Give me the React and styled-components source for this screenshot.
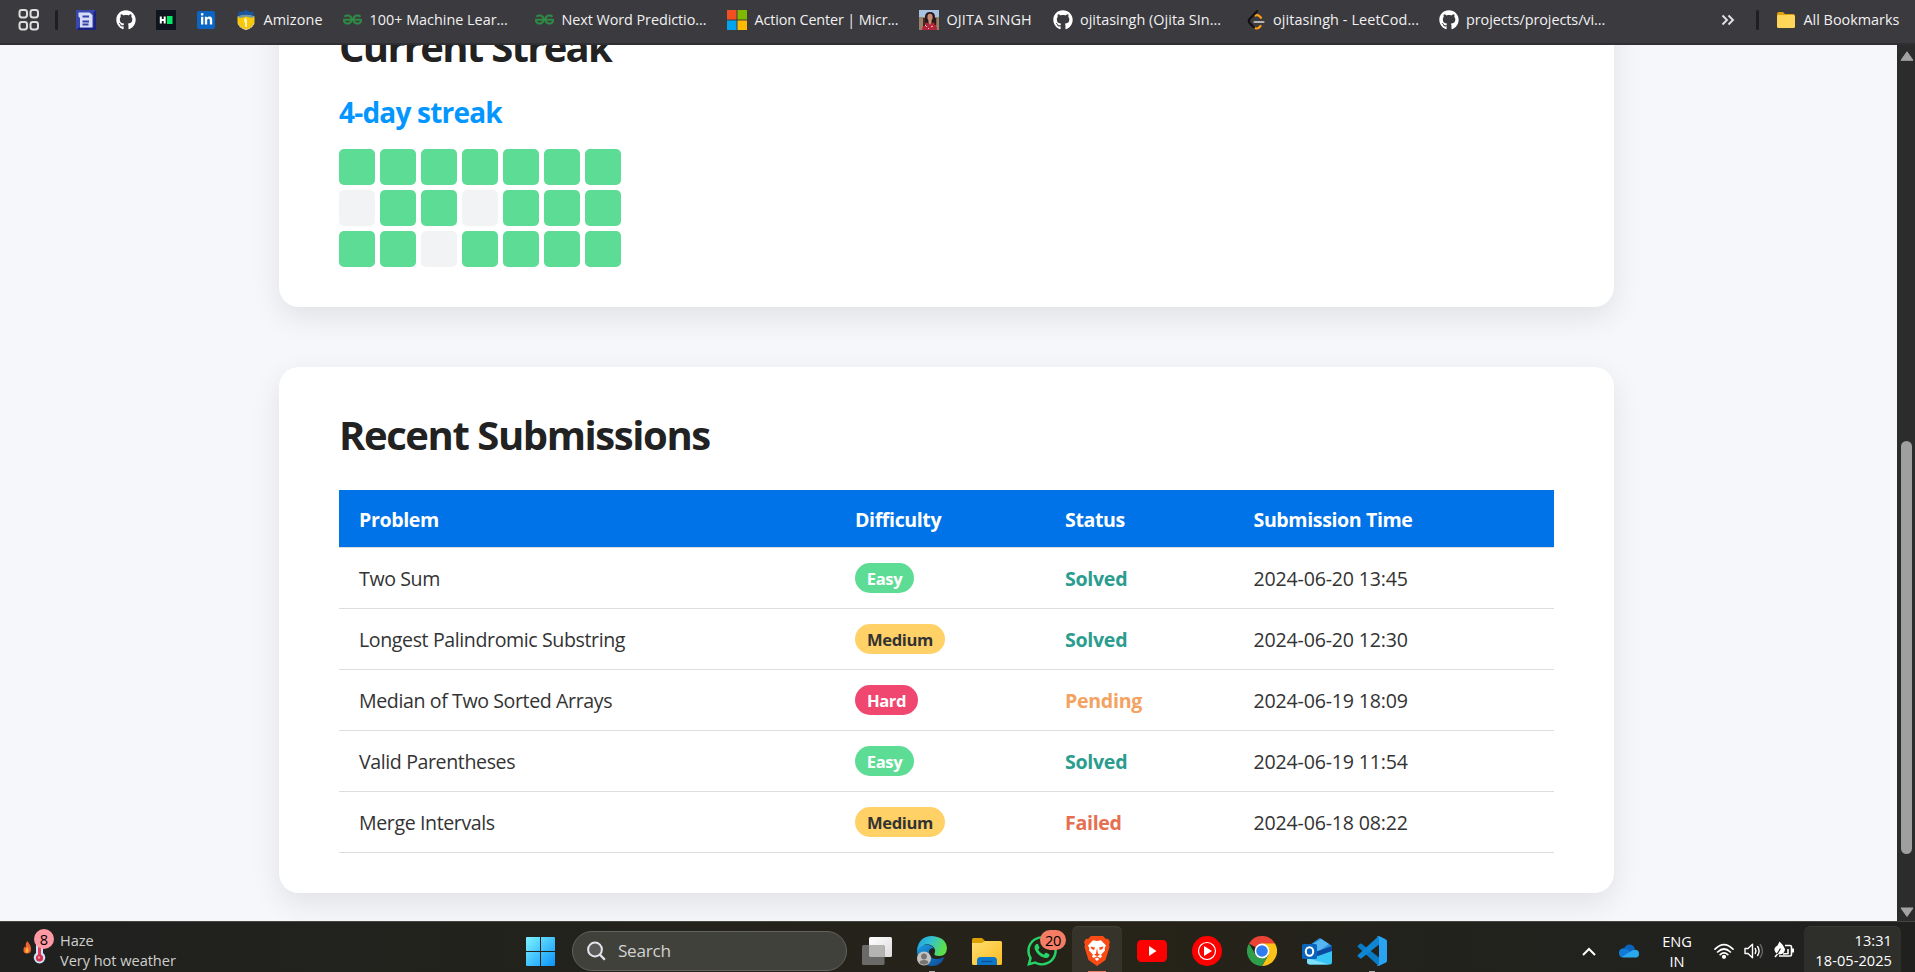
import React from "react";
import styled, { createGlobalStyle } from "styled-components";
import { FaGithub, FaWhatsapp, FaLinkedinIn } from "react-icons/fa6";
import { SiGeeksforgeeks } from "react-icons/si";

const GlobalStyle = createGlobalStyle`
  * { box-sizing: border-box; }
  html, body { margin: 0; padding: 0; }
  body {
    font-family: "Open Sans", "Noto Sans", sans-serif;
    overflow: hidden;
    background: #f5f7fb;
  }
  svg { display: block; flex: none; }
`;

const Screen = styled.div`
  display: flex;
  flex-direction: column;
  width: 1915px;
  height: 972px;
  overflow: hidden;
`;

/* ---------- bookmarks bar ---------- */

const BookmarksBar = styled.header`
  display: flex;
  align-items: center;
  height: 45px;
  flex: none;
  padding: 0 17px 4px 16px;
  background: #3b3a3e;
  border-bottom: 2px solid #302f33;
  color: #f1f1f3;
  font-size: 14.4px;
`;

const BarDivider = styled.span`
  width: 3px;
  height: 20px;
  border-radius: 2px;
  background: #1f1f22;
  margin: 0 ${(p) => p.$after}px 0 ${(p) => p.$before}px;
`;

const IconBookmark = styled.span`
  display: flex;
  justify-content: center;
  width: 20px;
  margin-right: 20px;
`;

const Bookmark = styled.span`
  display: flex;
  align-items: center;
  gap: 7.5px;
  width: ${(p) => p.$width}px;
  flex: none;
  white-space: nowrap;
  letter-spacing: ${(p) => p.$track}px;
`;

const IconSlot = styled.span`
  display: flex;
  justify-content: center;
  width: 20px;
  flex: none;
`;

const BarSpacer = styled.span`
  flex: 1;
`;

/* ---------- page ---------- */

const Browser = styled.div`
  display: flex;
  flex: 1;
  min-height: 0;
  background: #f5f7fb;
`;

const Viewport = styled.main`
  flex: 1;
  overflow: hidden;
  padding-left: 279px;
`;

const Page = styled.div`
  display: flex;
  flex-direction: column;
  gap: 60px;
  width: 1335px;
  margin-top: -66px;
`;

const Card = styled.section`
  padding: 40px 60px;
  border-radius: 20px;
  background: #fff;
  box-shadow: 0 10px 30px rgba(0, 0, 0, 0.09);
`;

const CardTitle = styled.h2`
  margin: 0 0 ${(p) => p.$gap}px;
  font-size: 40px;
  line-height: 55px;
  font-weight: 700;
  color: #222;
  letter-spacing: ${(p) => p.$track}px;
  white-space: nowrap;
`;

const StreakCount = styled.p`
  margin: 0 0 18px;
  font-size: 28px;
  line-height: 38px;
  font-weight: 700;
  color: #0496ff;
  letter-spacing: -0.8px;
`;

const StreakGrid = styled.div`
  display: grid;
  grid-template-columns: repeat(7, 36px);
  grid-auto-rows: 36px;
  gap: 5px;
`;

const Day = styled.span`
  border-radius: 5px;
  background: ${(p) => (p.$active ? "#5ddc96" : "#f1f3f5")};
`;

const Table = styled.div`
  display: flex;
  flex-direction: column;
  color: #333;
  font-size: 19.6px;
`;

const Row = styled.div`
  display: grid;
  grid-template-columns: 496px 210px 188.5px 1fr;
  align-items: center;
  height: 61px;
  padding-left: 20px;
  border-bottom: 1px solid #ddd;
  white-space: nowrap;
`;

const HeadRow = styled(Row)`
  height: 58px;
  padding-top: 1px;
  background: #0073e8;
  background-clip: padding-box;
  color: #fff;
  font-weight: 700;
`;

const HeadCell = styled.span`
  letter-spacing: -0.4px;
`;

const Problem = styled.span`
  letter-spacing: -0.4px;
`;

const Time = styled.span`
  letter-spacing: -0.19px;
`;

const statusColors = { Solved: "#2a9d8f", Pending: "#f4a261", Failed: "#e76f51" };

const Status = styled.span`
  font-weight: 700;
  letter-spacing: -0.3px;
  color: ${(p) => statusColors[p.$kind]};
`;

const levels = {
  Easy: { bg: "#5ddc96", fg: "#fff", width: 59 },
  Medium: { bg: "#ffd166", fg: "#333", width: 90 },
  Hard: { bg: "#ef476f", fg: "#fff", width: 63 },
};

const Badge = styled.span`
  display: flex;
  align-items: center;
  justify-content: center;
  width: ${(p) => levels[p.$level].width}px;
  height: 30px;
  padding-top: 1px;
  border-radius: 15px;
  background: ${(p) => levels[p.$level].bg};
  color: ${(p) => levels[p.$level].fg};
  font-size: 16.6px;
  font-weight: 700;
  letter-spacing: -0.4px;
`;

/* ---------- scrollbar ---------- */

const Scrollbar = styled.aside`
  display: flex;
  flex-direction: column;
  align-items: center;
  width: 18px;
  padding: 6px 0 4px 1px;
  background: #2c2c2c;
`;

const Thumb = styled.span`
  width: 11px;
  height: 413px;
  margin-top: 380px;
  margin-bottom: auto;
  border-radius: 6px;
  background: #9f9f9f;
`;

/* ---------- taskbar ---------- */

const Taskbar = styled.footer`
  display: flex;
  align-items: flex-start;
  height: 51px;
  flex: none;
  border-top: 1px solid #464641;
  background: linear-gradient(90deg, #20201f 0%, #22221d 25%, #262318 60%, #22221d 75%, #20201f 100%);
  color: #fff;
  font-size: 14.6px;
  line-height: 20px;
`;

const Weather = styled.div`
  display: flex;
  width: 526px;
  padding: 7px 0 0 22px;
`;

const WeatherIcon = styled.span`
  position: relative;
  width: 38px;
  height: 40px;
`;

const WeatherBadge = styled.span`
  position: absolute;
  left: 12px;
  top: 0;
  width: 20px;
  height: 20px;
  border-radius: 50%;
  background: #ff99a4;
  color: #000;
  text-align: center;
  font-size: 14.6px;
  line-height: 20px;
`;

const WeatherText = styled.div`
  padding-top: 1px;
  color: #cfcfcd;
  white-space: nowrap;
  letter-spacing: ${(p) => p.$track}px;
`;

const StartButton = styled.span`
  padding-top: 15px;
  width: 46px;
`;

const SearchBox = styled.div`
  display: flex;
  align-items: center;
  gap: 12px;
  width: 275px;
  height: 40px;
  margin: 9px 2.5px 0 0;
  padding-left: 14px;
  border: 1px solid #62625d;
  border-radius: 20px;
  background: #41413c;
  color: #d2d2d0;
  font-size: 17.2px;
  letter-spacing: -0.3px;
`;

const AppTile = styled.span`
  position: relative;
  display: flex;
  justify-content: center;
  align-items: center;
  width: 50px;
  height: 50px;
  margin: 4px 2.5px 0;
  border-radius: 6px 6px 0 0;
  ${(p) => p.$active && "background: #35332a; box-shadow: inset 0 1px 0 #403e36;"}
`;

const RunningMark = styled.span`
  position: absolute;
  bottom: 4px;
  left: ${(p) => (50 - p.$width) / 2}px;
  width: ${(p) => p.$width}px;
  height: 1px;
  background: ${(p) => p.$color};
`;

const CountBadge = styled.span`
  position: absolute;
  left: 23px;
  top: 4px;
  width: 26px;
  height: 20px;
  border-radius: 10px;
  background: #f57d65;
  color: #000;
  text-align: center;
  font-size: 14.6px;
  letter-spacing: -0.4px;
`;

const Tray = styled.div`
  display: flex;
  margin-left: auto;
  padding-right: 14px;
`;

const TrayItem = styled.span`
  display: flex;
  justify-content: center;
  width: ${(p) => p.$width}px;
  padding-top: ${(p) => p.$top}px;
`;

const Language = styled.div`
  width: 42px;
  padding-top: 9px;
  text-align: center;
  letter-spacing: -0.1px;
`;

const Clock = styled.div`
  width: 97px;
  height: 50px;
  margin: 4px 0 -4px -6px;
  padding: 4px 9px 0 0;
  border-radius: 7px 7px 0 0;
  background: #2e2e2b;
  box-shadow: inset 0 1px 0 #383835;
  text-align: right;
  letter-spacing: 0.05px;
  white-space: nowrap;
`;

/* ---------- icons ---------- */

const AppsGrid = () => (
  <svg width="24" height="24" viewBox="0 0 24 24" fill="none" stroke="#dededf" strokeWidth="2">
    <rect x="3.500" y="2" width="7.5" height="7.5" rx="2.4" />
    <rect x="14.500" y="2" width="7.5" height="7.5" rx="2.4" />
    <rect x="3.500" y="14" width="7.5" height="7.5" rx="2.4" />
    <rect x="14.500" y="14" width="7.5" height="7.5" rx="2.4" />
  </svg>
);

const LetterLogo = () => (
  <svg width="20" height="20" viewBox="0 0 20 20">
    <rect width="20" height="20" fill="#3948ae" />
    <path d="M0 20L20 20V0l-2.500 2.500v15H2.500z" fill="#1a237e" />
    <path d="M2.500 2.500h11l3 2.500v12.500H4V8L2.500 6.500z" fill="#d9dcf6" />
    <path d="M6.500 6.500h6.500M6.500 11.500H13M6.500 14.500h6" stroke="#3442a8" strokeWidth="1.800" />
  </svg>
);

const RankLogo = () => (
  <svg width="20" height="20" viewBox="0 0 20 20">
    <rect width="20" height="20" fill="#0e141e" />
    <path d="M4.800 6.500v7M8.700 6.500v7M4.800 10h4" stroke="#fff" strokeWidth="2" fill="none" />
    <rect x="11" y="6" width="5.500" height="8" fill="#00ea64" />
  </svg>
);

const LinkedInTile = styled.span`
  display: flex;
  align-items: center;
  justify-content: center;
  width: 18px;
  height: 18px;
  border-radius: 2px;
  background: #0a66c2;
  color: #fff;
`;

const AmizoneLogo = () => (
  <svg width="18" height="20" viewBox="0 0 18 20">
    <path d="M2 1.500L5 2l4-2 4 2 3-.500L17.500 7H.500z" fill="#1b55a0" />
    <path d="M.500 6.500q8.500-3 17 0v6Q16 18 9 20 2 18 .500 12.500z" fill="#f6c70b" />
    <path d="M.500 6.500q8.500-3.500 17 0L15 8 9 6.500 3 8z" fill="#6f97a8" />
    <path d="M8 8q2 0 2 3v6H8v-4q-2-2 0-5z" fill="#fff1b0" />
    <path d="M1 13.500q1.500 4.500 8 6.200" stroke="#d8dbe0" fill="none" strokeDasharray="2 1" />
    <path d="M17 13.500q-1.500 4.500-8 6.200" stroke="#d8dbe0" fill="none" strokeDasharray="2 1" />
  </svg>
);

const MicrosoftLogo = () => (
  <svg width="20" height="20" viewBox="0 0 20 20">
    <rect width="9.500" height="9.500" fill="#f25022" />
    <rect x="10.500" width="9.500" height="9.500" fill="#7fba00" />
    <rect y="10.500" width="9.500" height="9.500" fill="#00a4ef" />
    <rect x="10.500" y="10.500" width="9.500" height="9.500" fill="#ffb900" />
  </svg>
);

const Portrait = () => (
  <svg width="20" height="20" viewBox="0 0 20 20">
    <rect width="20" height="20" fill="#a9c4e2" />
    <path d="M0 7h20v13H0z" fill="#9a8268" />
    <path d="M6 15V7q0-5 5-5t5 5v8z" fill="#2a1a1c" />
    <ellipse cx="11" cy="7.200" rx="2.600" ry="3.400" fill="#c98d72" />
    <path d="M3 20q1-7 5-7.500l3 2 3-2q4 1 4 7.500z" fill="#b3233a" />
    <path d="M9.500 10h3v3l-1.500 2-1.500-2z" fill="#c98d72" />
    <path d="M6 15l2 2M12 17l2-1M9 18l1 1" stroke="#f0c8c8" />
    <path d="M5 8v8M16.500 8v7" stroke="#2a1a1c" strokeWidth="1.600" />
  </svg>
);

const LeetLogo = () => (
  <svg width="18" height="20" viewBox="0 0 18 20" fill="none" strokeWidth="2.200" strokeLinecap="round">
    <path d="M13.500 16l-1.500 1.600q-2.500 1.800-5 0" stroke="#ffa116" />
    <path d="M8.500 5.500q2-1 4 .800l1.500 1.500" stroke="#ffa116" />
    <path d="M10 1.200L2.600 9q-1.600 2 0 4L7 17.600" stroke="#111" />
    <path d="M7.500 12h9" stroke="#b3b3b3" />
  </svg>
);

const BookmarkFolder = () => (
  <svg width="20" height="18" viewBox="0 0 20 18">
    <path d="M1 3q0-2 2-2h4l2 2h8q2 0 2 2v4H1z" fill="#e0a010" />
    <rect x="1" y="4" width="18" height="13" rx="1.500" fill="#ffd65a" />
  </svg>
);

const Chevrons = () => (
  <svg width="14" height="12" viewBox="0 0 14 12" fill="none" stroke="#e3e3e5" strokeWidth="1.900">
    <path d="M1.500 1.500L6 6l-4.500 4.500M7.500 1.500L12 6l-4.500 4.500" />
  </svg>
);

const Arrow = ({ down }) => (
  <svg width="14" height="10" viewBox="0 0 14 10">
    <path d={down ? "M1 1h12L7 9.500z" : "M1 9.300h12L7 .800z"} fill="#a3a3a3" stroke="#a3a3a3" strokeLinejoin="round" />
  </svg>
);

const Thermometer = () => (
  <svg width="38" height="40" viewBox="0 0 38 40">
    <path d="M5 12q4 4 4 8 0 4.500-4 4.500T1.500 20.500q0-2 1.200-3 .3 1 1 1Q3.500 14 5 12z" fill="#f0652f" />
    <path d="M5 18q2 2 1.500 4t-2.500 2q-1.500-2 1-6z" fill="#ffb638" />
    <path d="M14 8h7v16a5.800 5.800 0 1 1-7 0z" fill="#c9e4f7" />
    <path d="M17.500 14v15" stroke="#e0405b" strokeWidth="3" />
    <circle cx="17.500" cy="29" r="3.600" fill="#d9304f" />
    <circle cx="17" cy="28.500" r="1.200" fill="#f49aa9" />
  </svg>
);

const WindowsLogo = () => (
  <svg width="29" height="29" viewBox="0 0 29 29">
    <defs>
      <linearGradient id="win" x1="0" y1="0" x2="1" y2="1">
        <stop offset="0" stopColor="#7df3ff" />
        <stop offset="1" stopColor="#0a93fb" />
      </linearGradient>
    </defs>
    <path d="M0 1q0-1 1-1h13v14H0zM15 0h13q1 0 1 1v13H15zM0 15h14v14H1q-1 0-1-1zM15 15h14v13q0 1-1 1H15z" fill="url(#win)" />
  </svg>
);

const SearchIcon = () => (
  <svg width="19" height="20" viewBox="0 0 19 20" fill="none" stroke="#e4e4ec" strokeWidth="2">
    <circle cx="8" cy="8.500" r="6.900" fill="#5a5a58" />
    <path d="M12.800 13.500l5 5.300" strokeWidth="2.400" />
  </svg>
);

const TaskView = () => (
  <svg width="30" height="28" viewBox="0 0 30 28">
    <defs>
      <linearGradient id="tv" x1="0" y1="0" x2="1" y2="1">
        <stop offset="0" stopColor="#fff" />
        <stop offset="1" stopColor="#dcdcdc" />
      </linearGradient>
    </defs>
    <rect x="7" y="0" width="23" height="20" rx="1.500" fill="url(#tv)" />
    <rect x="0" y="8" width="22.500" height="20" rx="1.500" fill="#6a6a68" />
    <path d="M7 8h14q1.500 0 1.500 1.500V20H8.500Q7 20 7 18.500z" fill="#b4b4b3" />
  </svg>
);

const EdgeLogo = () => (
  <svg width="30" height="30" viewBox="0 0 30 30">
    <defs>
      <linearGradient id="eg" x1="0" y1="0" x2="1" y2=".3">
        <stop offset="0" stopColor="#1c9fe2" />
        <stop offset=".5" stopColor="#35c1d0" />
        <stop offset="1" stopColor="#5be04a" />
      </linearGradient>
      <linearGradient id="eb" x1="0" y1="0" x2="1" y2="1">
        <stop offset="0" stopColor="#1b9de2" />
        <stop offset="1" stopColor="#0c4a9a" />
      </linearGradient>
    </defs>
    <path d="M0 15Q0 9 7 8.500q8 0 10 4-4-1-5 3-.500 6 6 7.500 5 .500 9.500-2Q24 30 15 30 1 29 0 15z" fill="url(#eb)" />
    <path d="M0 14Q2 0 15 0q14 1 15 12-.500 8-7.500 8-6 0-5-2.500 2-4-2-7.500Q8 5 0 14z" fill="url(#eg)" />
    <circle cx="7" cy="22.500" r="7" fill="#c5c3c0" />
    <circle cx="7" cy="20.500" r="2.900" fill="#777472" />
    <path d="M2.500 27q0-3 4.500-3t4.500 3q-4.500 3.500-9 0z" fill="#777472" />
  </svg>
);

const ExplorerLogo = () => (
  <svg width="30" height="27" viewBox="0 0 30 27">
    <defs>
      <linearGradient id="fo" x1="0" y1="0" x2="1" y2="1">
        <stop offset="0" stopColor="#ffdf72" />
        <stop offset="1" stopColor="#fcbc20" />
      </linearGradient>
    </defs>
    <path d="M0 1.500Q0 0 1.500 0H10l3 3v4H0z" fill="#dda000" />
    <path d="M0 5h10l3-2h15.500Q30 3 30 4.500v21q0 1.500-1.500 1.500h-27Q0 27 0 25.500z" fill="url(#fo)" />
    <path d="M5 27v-4.500Q5 19 8.500 19h13q3.500 0 3.500 3.500V27z" fill="#0c78cc" />
    <path d="M9.500 23.500h11" stroke="#0a4f91" strokeWidth="1.300" />
  </svg>
);

const BraveLogo = () => (
  <svg width="26" height="30" viewBox="0 0 26 30">
    <path d="M7 0h12l3 3 2-.3 2 3.300-1 3 .6 2L21.500 24 13 30 4.500 24 .400 11 1 9 0 6l2-3.300L4 3z" fill="#fb4a14" />
    <path d="M13 5l4-.8 5 5.300-1.300 2.500.3 2.500-4 4.300 1 1.700-5 4.500-5-4.500 1-1.700-4-4.300.3-2.500L4 9.500l5-5.300z" fill="#fff" />
    <path d="M6.500 10.500l4.500 1-.8 2.500-2.700-1zM19.500 10.500l-4.500 1 .8 2.500 2.700-1zM13 12l1 5.500 2 1.300-3 1.500-3-1.500 2-1.300z" fill="#fb4a14" />
    <path d="M10 22.500l3-1.500 3 1.500" stroke="#fb4a14" strokeWidth="1.200" fill="none" />
  </svg>
);

const YouTubeLogo = () => (
  <svg width="30" height="22" viewBox="0 0 30 22">
    <rect width="30" height="22" rx="4.500" fill="#f00" />
    <path d="M12 6l7.500 5-7.500 5z" fill="#fff" />
  </svg>
);

const YouTubeMusicLogo = () => (
  <svg width="30" height="30" viewBox="0 0 30 30">
    <circle cx="15" cy="15" r="15" fill="#f00" />
    <circle cx="15" cy="15" r="8.500" fill="none" stroke="#fff" strokeWidth="1.200" />
    <path d="M12 10l8 5-8 5z" fill="#fff" />
  </svg>
);

const ChromeLogo = () => (
  <svg width="30" height="30" viewBox="0 0 30 30">
    <path d="M15 15L2 7.500A15 15 0 0 1 28 7.500z" fill="#ea4335" />
    <path d="M15 7.500h13A15 15 0 0 1 15 30l6.500-11.250z" fill="#fbc116" />
    <path d="M21.500 18.750L15 30A15 15 0 0 1 2 7.500l6.500 11.250q3 4 6.500 3.750t6.500-3.750z" fill="#2f9e4a" />
    <circle cx="15" cy="15" r="7.400" fill="#fff" />
    <circle cx="15" cy="15" r="5.800" fill="#2f7cee" />
  </svg>
);

const OutlookLogo = () => (
  <svg width="30" height="27" viewBox="0 0 30 27">
    <path d="M5 9L17 .500q1-.7 2 0L30 8v8H5z" fill="#2a8ee0" />
    <path d="M8 8l11-7 8 5-11 8z" fill="#55b6f0" />
    <path d="M13 14l17-6v6l-14 8z" fill="#0b4a9e" />
    <path d="M5 16l11 2 14-5v11.500q0 2-2 2H8q-3 0-3-3z" fill="#36c5f4" />
    <path d="M5 20l22 6.500H8q-3 0-3-3z" fill="#7fe0fa" />
    <rect y="6" width="15" height="15" rx="1.500" fill="#0c65bd" />
    <ellipse cx="7.500" cy="13.500" rx="3.700" ry="4.300" fill="none" stroke="#fff" strokeWidth="2" />
  </svg>
);

const CodeLogo = () => (
  <svg width="30" height="30" viewBox="0 0 30 30">
    <path d="M1 9.500l2-1.700q.8-.6 1.600 0L22 21.500V29q-1 .5-2-.5L.900 11q-.7-.8.100-1.500z" fill="#0a7bc4" />
    <path d="M1 20.500l2 1.700q.8.600 1.600 0L22 8.500V1q-1-.500-2 .500L.900 19q-.7.800.100 1.500z" fill="#0f86d4" />
    <path d="M21.500 0q.7 0 7 3.200 1.500.7 1.500 2v19.600q0 1.300-1.500 2L21.500 30q-1.500 0-2-1 2.500 1 2.500-1.500v-25Q22 0 19.500 1q1-1 2-1z" fill="#2aa4f2" />
  </svg>
);

const UpCaret = () => (
  <svg width="14" height="9" viewBox="0 0 14 9" fill="none" stroke="#fff" strokeWidth="2">
    <path d="M1 8l6-6 6 6" />
  </svg>
);

const OneDrive = () => (
  <svg width="20" height="14" viewBox="0 0 20 14">
    <path d="M5 4.500Q7 0 11 .500q4 .500 5 4.500l-5 4-8 3Q0 11 0 8.500q0-4 5-4z" fill="#0a64bd" />
    <path d="M0 8.500Q1 4 5 4.500q2 0 5 2l4 4-11 3Q0 12.500 0 8.500z" fill="#117ad6" />
    <path d="M3 12.800L14 6q6-1 6 4 0 3.300-3 3.500H4.500z" fill="#29a8ee" />
  </svg>
);

const Wifi = () => (
  <svg width="20" height="16" viewBox="0 0 20 16" fill="none" stroke="#fff" strokeWidth="1.700" strokeLinecap="round">
    <path d="M1 6.200q9-9 18 0M3.600 9q6.400-6 12.800 0M6.200 11.600q3.800-3.400 7.600 0" />
    <circle cx="10" cy="13.800" r="1.300" fill="#fff" />
  </svg>
);

const Speaker = () => (
  <svg width="20" height="16" viewBox="0 0 20 16" fill="none" stroke="#fff" strokeWidth="1.400" strokeLinecap="round" strokeLinejoin="round">
    <path d="M1 5.500h3L8.500 1.300v13.400L4 10.500H1z" />
    <path d="M11.200 5.500q1.600 2.500 0 5M13.600 3.500q3 4.500 0 9" />
    <path d="M16.200 1.500q4.500 6.500 0 13" stroke="#666" />
  </svg>
);

const Battery = () => (
  <svg width="20" height="18" viewBox="0 0 20 18">
    <path d="M11 4.500h5q1.500 0 1.500 1.500v7.500q0 1.500-1.500 1.500H5" fill="none" stroke="#fff" strokeWidth="1.600" />
    <path d="M18 7.500h2v4h-2z" fill="#fff" />
    <path d="M5.500.500q4 3.500 5.500 7.500 0 5-6 5.500Q0 12 .500 7.500q1-2 3-3z" fill="#fff" />
    <path d="M1 16.500L6.500 7.500" stroke="#22221d" strokeWidth="1.200" />
    <path d="M1 16l2.500-3M9 13l5-.5V8" stroke="#fff" strokeWidth="1.600" fill="none" />
  </svg>
);

/* ---------- data ---------- */

const Geeks = () => <SiGeeksforgeeks size={19} color="#2f8d46" stroke="#2f8d46" strokeWidth={0.6} />;
const GitHub = () => <FaGithub size={20} color="#fff" />;

const bookmarks = [
  { icon: <AmizoneLogo />, label: "Amizone", width: 106, track: 0.1 },
  { icon: <Geeks />, label: "100+ Machine Lear...", width: 192, track: 0 },
  { icon: <Geeks />, label: "Next Word Predictio...", width: 193, track: -0.07 },
  { icon: <MicrosoftLogo />, label: "Action Center | Micr...", width: 192, track: -0.14 },
  { icon: <Portrait />, label: "OJITA SINGH", width: 133.5, track: 0.15 },
  { icon: <GitHub />, label: "ojitasingh (Ojita SIn...", width: 193, track: 0.03 },
  { icon: <LeetLogo />, label: "ojitasingh - LeetCod...", width: 193, track: 0.1 },
  { icon: <GitHub />, label: "projects/projects/vi...", width: 193, track: -0.06 },
];

const days = [1, 1, 1, 1, 1, 1, 1, 0, 1, 1, 0, 1, 1, 1, 1, 1, 0, 1, 1, 1, 1];

const submissions = [
  ["Two Sum", "Easy", "Solved", "2024-06-20 13:45"],
  ["Longest Palindromic Substring", "Medium", "Solved", "2024-06-20 12:30"],
  ["Median of Two Sorted Arrays", "Hard", "Pending", "2024-06-19 18:09"],
  ["Valid Parentheses", "Easy", "Solved", "2024-06-19 11:54"],
  ["Merge Intervals", "Medium", "Failed", "2024-06-18 08:22"],
];

export default function App() {
  return (
    <Screen>
      <GlobalStyle />
      <BookmarksBar>
        <AppsGrid />
        <BarDivider $before={15} $after={18} />
        <IconBookmark><LetterLogo /></IconBookmark>
        <IconBookmark><GitHub /></IconBookmark>
        <IconBookmark><RankLogo /></IconBookmark>
        <IconBookmark>
          <LinkedInTile><FaLinkedinIn size={13} /></LinkedInTile>
        </IconBookmark>
        {bookmarks.map((b) => (
          <Bookmark key={b.label} $width={b.width} $track={b.track}>
            <IconSlot>{b.icon}</IconSlot>
            {b.label}
          </Bookmark>
        ))}
        <BarSpacer />
        <Chevrons />
        <BarDivider $before={21} $after={17} />
        <Bookmark $width={122} $track={0}>
          <IconSlot><BookmarkFolder /></IconSlot>
          All Bookmarks
        </Bookmark>
      </BookmarksBar>

      <Browser>
        <Viewport>
          <Page>
            <Card>
              <CardTitle $gap={19} $track={-1.7}>Current Streak</CardTitle>
              <StreakCount>4-day streak</StreakCount>
              <StreakGrid>
                {days.map((d, i) => <Day key={i} $active={d === 1} />)}
              </StreakGrid>
            </Card>
            <Card>
              <CardTitle $gap={28} $track={-1.42}>Recent Submissions</CardTitle>
              <Table>
                <HeadRow>
                  <HeadCell>Problem</HeadCell>
                  <HeadCell>Difficulty</HeadCell>
                  <HeadCell>Status</HeadCell>
                  <HeadCell>Submission Time</HeadCell>
                </HeadRow>
                {submissions.map(([problem, level, status, time]) => (
                  <Row key={problem}>
                    <Problem>{problem}</Problem>
                    <Badge $level={level}>{level}</Badge>
                    <Status $kind={status}>{status}</Status>
                    <Time>{time}</Time>
                  </Row>
                ))}
              </Table>
            </Card>
          </Page>
        </Viewport>
        <Scrollbar>
          <Arrow />
          <Thumb />
          <Arrow down />
        </Scrollbar>
      </Browser>

      <Taskbar>
        <Weather>
          <WeatherIcon>
            <Thermometer />
            <WeatherBadge>8</WeatherBadge>
          </WeatherIcon>
          <WeatherText $track={-0.05}>
            <div>Haze</div>
            <div>Very hot weather</div>
          </WeatherText>
        </Weather>
        <StartButton><WindowsLogo /></StartButton>
        <SearchBox><SearchIcon />Search</SearchBox>
        <AppTile><TaskView /></AppTile>
        <AppTile><EdgeLogo /><RunningMark $width={6} $color="#aaa" /></AppTile>
        <AppTile><ExplorerLogo /></AppTile>
        <AppTile><FaWhatsapp size={34} color="#25d366" /><CountBadge>20</CountBadge></AppTile>
        <AppTile $active><BraveLogo /><RunningMark $width={18} $color="#f57d65" /></AppTile>
        <AppTile><YouTubeLogo /></AppTile>
        <AppTile><YouTubeMusicLogo /></AppTile>
        <AppTile><ChromeLogo /></AppTile>
        <AppTile><OutlookLogo /></AppTile>
        <AppTile><CodeLogo /><RunningMark $width={6} $color="#aaa" /></AppTile>
        <Tray>
          <TrayItem $width={36} $top={25}><UpCaret /></TrayItem>
          <TrayItem $width={44} $top={22}><OneDrive /></TrayItem>
          <TrayItem $width={5} $top={0} />
          <Language><div>ENG</div><div>IN</div></Language>
          <TrayItem $width={52} $top={21}><Wifi /></TrayItem>
          <TrayItem $width={7} $top={21}><Speaker /></TrayItem>
          <TrayItem $width={53} $top={19}><Battery /></TrayItem>
          <Clock><div>13:31</div><div>18-05-2025</div></Clock>
        </Tray>
      </Taskbar>
    </Screen>
  );
}
